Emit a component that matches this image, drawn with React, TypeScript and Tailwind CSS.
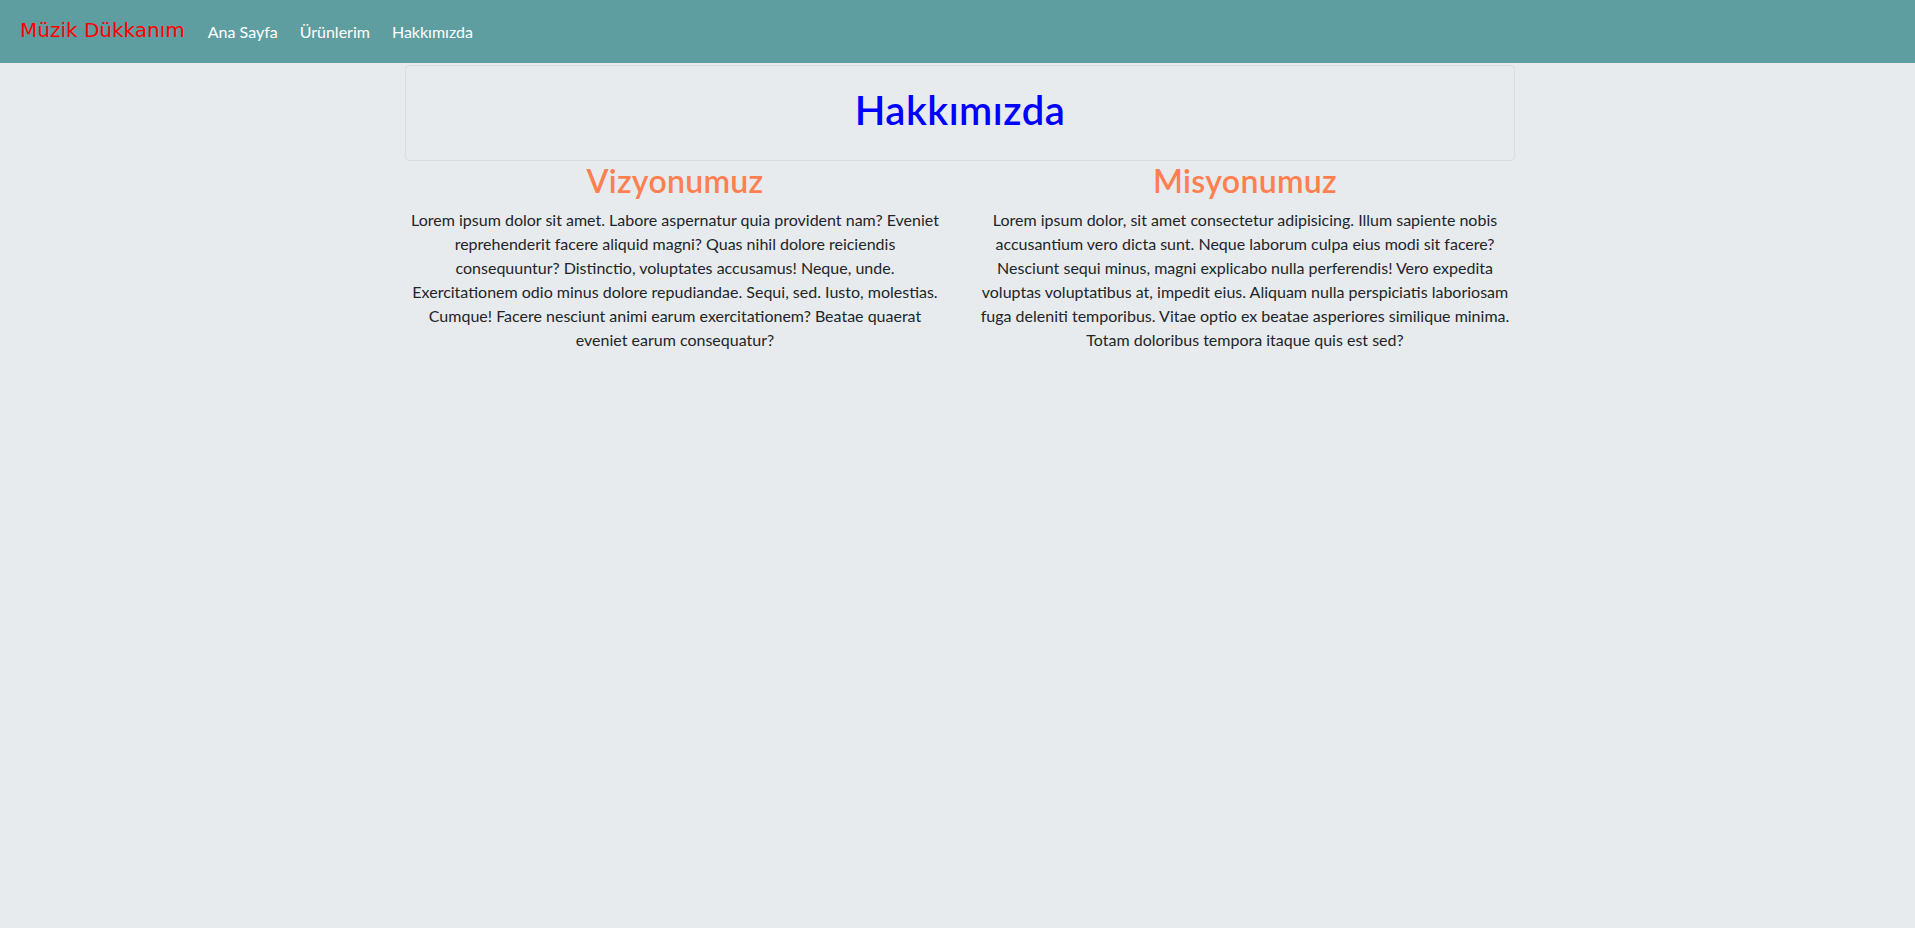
import React from 'react';

const links = ['Ana Sayfa', 'Ürünlerim', 'Hakkımızda'];

const columns = [
  {
    title: 'Vizyonumuz',
    text: 'Lorem ipsum dolor sit amet. Labore aspernatur quia provident nam? Eveniet reprehenderit facere aliquid magni? Quas nihil dolore reiciendis consequuntur? Distinctio, voluptates accusamus! Neque, unde. Exercitationem odio minus dolore repudiandae. Sequi, sed. Iusto, molestias. Cumque! Facere nesciunt animi earum exercitationem? Beatae quaerat eveniet earum consequatur?',
  },
  {
    title: 'Misyonumuz',
    text: 'Lorem ipsum dolor, sit amet consectetur adipisicing. Illum sapiente nobis accusantium vero dicta sunt. Neque laborum culpa eius modi sit facere? Nesciunt sequi minus, magni explicabo nulla perferendis! Vero expedita voluptas voluptatibus at, impedit eius. Aliquam nulla perspiciatis laboriosam fuga deleniti temporibus. Vitae optio ex beatae asperiores similique minima. Totam doloribus tempora itaque quis est sed?',
  },
];

const App: React.FC = () => {
  return (
    <div className="min-h-[928px] bg-[#e8ebee] font-['Lato','Open_Sans',sans-serif] text-[#212529]">
      {/* Navbar */}
      <nav className="flex h-[63px] items-center bg-[#5f9ea0] px-[20px]">
        <a href="#" className="mr-[12px] pb-[4px] font-['DejaVu_Sans',sans-serif] text-[20px] text-[#ff0000]">
          Müzik Dükkanım
        </a>
        <ul className="flex">
          {links.map((link) => (
            <li key={link}>
              <a href="#" className="block px-[11px] py-2 text-base text-white">
                {link}
              </a>
            </li>
          ))}
        </ul>
      </nav>

      <div className="mx-auto w-[1115px] pl-[5px]">
        {/* Jumbotron */}
        <div className="mt-[2px] rounded border border-[#dadde1] pt-[20px] pb-[18px] text-center">
          <h1 className="mb-2 text-[40px] leading-[1.2] font-semibold tracking-[0.5px] text-[#0000ff]">Hakkımızda</h1>
        </div>

        {/* Vision / Mission */}
        <div className="grid grid-cols-2 gap-[30px]">
          {columns.map((col) => (
            <div key={col.title} className="text-center">
              <h2 className="mt-[1px] mb-2 text-[32px] leading-[1.2] font-semibold tracking-[0.3px] text-[#ff7f50]">
                {col.title}
              </h2>
              <p className="text-base leading-6">{col.text}</p>
            </div>
          ))}
        </div>
      </div>
    </div>
  );
};

export default App;
